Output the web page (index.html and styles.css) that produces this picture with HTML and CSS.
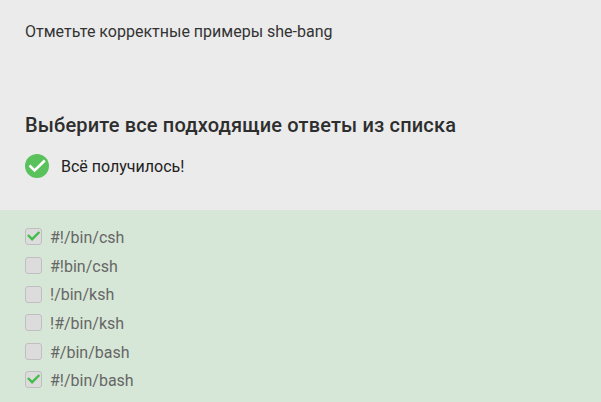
FILE: index.html
```html
<!DOCTYPE html>
<html lang="ru">
<head>
<meta charset="utf-8">
<title>she-bang</title>
<link rel="stylesheet" href="styles.css">
</head>
<body>
<main class="quiz">
  <p class="question">Отметьте корректные примеры she-bang</p>
  <h1 class="title">Выберите все подходящие ответы из списка</h1>
  <div class="status">
    <svg class="status-icon" viewBox="0 0 24 24"><circle cx="12" cy="12" r="12" fill="#5ac25c"/><path d="M4.5 11.5l5.1 5L19.8 6.5" fill="none" stroke="#fff" stroke-width="2.5"/></svg>
    <span class="label">Всё получилось!</span>
  </div>
  <ul class="answers">
    <li class="answer"><span class="box"><svg class="tick" viewBox="0 0 17 17"><path d="M2.9 7l4.2 4.2L14.4 4"/></svg></span><span class="label">#!/bin/csh</span></li>
    <li class="answer"><span class="box"></span><span class="label">#!bin/csh</span></li>
    <li class="answer"><span class="box"></span><span class="label">!/bin/ksh</span></li>
    <li class="answer"><span class="box"></span><span class="label">!#/bin/ksh</span></li>
    <li class="answer"><span class="box"></span><span class="label">#/bin/bash</span></li>
    <li class="answer"><span class="box"><svg class="tick" viewBox="0 0 17 17"><path d="M2.9 7l4.2 4.2L14.4 4"/></svg></span><span class="label">#!/bin/bash</span></li>
  </ul>
</main>
</body>
</html>
```
FILE: styles.css
```css
* { box-sizing: border-box; margin: 0; padding: 0; }
body { background: #ebebeb; color: #222; font: 16px/24px Roboto, sans-serif; overflow: hidden; }
.quiz { height: 402px; display: flex; flex-direction: column; padding-top: 20px; }
.question { padding: 0 25px; color: #333; }
.title { margin-top: 67px; padding: 0 25px; font-size: 20px; line-height: 28px; font-weight: 500; letter-spacing: 0.16px; color: #2e2e2e; }
.status { display: flex; align-items: center; gap: 12px; height: 24px; margin-top: 15px; padding: 0 25px; }
.status-icon { width: 24px; height: 24px; }
.label { padding-top: 2.6px; }
.status .label { padding-top: 2px; }
.answers { flex: 1; margin-top: 32px; padding: 12.6px 25px 0; background: #d7e7d7; list-style: none; color: #666; }
.answer { display: flex; align-items: center; gap: 8px; height: 28.6px; }
.box { width: 17px; height: 17px; border: 1px solid #c1bec1; border-radius: 3px; background: #dcdcdc; }
.tick { display: block; width: 17px; height: 17px; margin: -1px; fill: none; stroke: #46bd4c; stroke-width: 2.4; }
```
